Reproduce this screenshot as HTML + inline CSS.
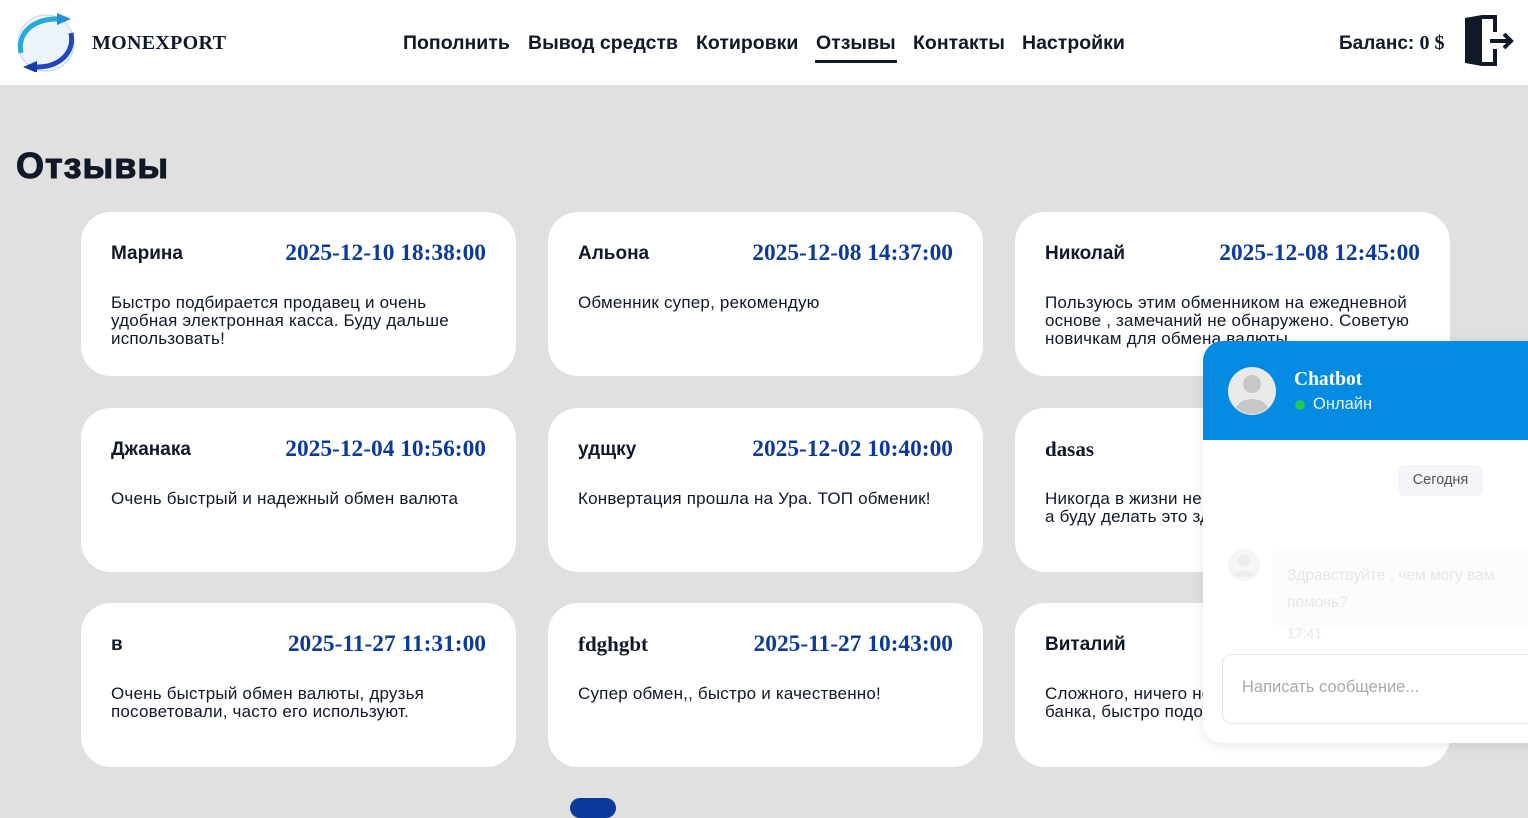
<!DOCTYPE html>
<html><head><meta charset="utf-8"><style>
*{margin:0;padding:0;box-sizing:border-box}
body{width:1528px;height:804px;overflow:hidden;background:#e0e0e0;font-family:"Liberation Sans",sans-serif;color:#111827;position:relative}
.hdr{position:absolute;left:0;top:0;width:1528px;height:85px;background:#fff}
.logo{position:absolute;left:92px;top:32px;font:bold 20px "Liberation Serif",serif;color:#111827;letter-spacing:.3px}
.nav{position:absolute;top:32px;font-weight:bold;font-size:19.5px}
.nav span{position:absolute;white-space:nowrap}
.bal{position:absolute;left:1339px;top:32px;font-weight:bold;font-size:19px}
h1{position:absolute;left:16px;top:145px;font-size:36px;font-weight:bold;letter-spacing:1px;-webkit-text-stroke:1px #111827}
.card{position:absolute;width:435px;height:164px;background:#fff;border-radius:30px}
.nm{position:absolute;left:30px;top:31px;font-weight:bold;font-size:19px}
.dt{position:absolute;right:30px;top:28px;font:bold 23.4px "Liberation Serif",serif;color:#0b3a9a}
.tx{position:absolute;left:30px;top:82px;width:368px;font-size:17px;line-height:18px;letter-spacing:.2px}
.chat{position:absolute;left:1203px;top:341px;width:340px;height:402px;background:#fff;border-radius:20px 0 0 20px;overflow:hidden;box-shadow:0 2px 12px rgba(0,0,0,.1)}
.ch{height:99px;background:#068be3;position:relative}
</style></head><body>
<div class="hdr">
<svg style="position:absolute;left:15px;top:13px" width="63" height="59" viewBox="0 0 63 59"><circle cx="31" cy="30" r="28" fill="#eef4fb" stroke="#bcd3ee"/><path d="M6 40 C2 20 18 6 42 6" stroke="#2aa8d8" stroke-width="5" fill="none"/><polygon points="42,0 56,6 42,12" fill="#1e90d8"/><path d="M56 20 C60 40 44 54 22 54" stroke="#1f47b8" stroke-width="5" fill="none"/><polygon points="22,48 8,54 22,60" fill="#1a3aa8"/></svg>
<div class="logo">MONEXPORT</div>
<div class="nav"><span style="left:403px">Пополнить</span><span style="left:528px">Вывод средств</span><span style="left:696px">Котировки</span><span style="left:816px">Отзывы</span><span style="left:913px">Контакты</span><span style="left:1022px">Настройки</span></div>
<div style="position:absolute;left:815px;top:60px;width:82px;height:3px;background:#111827"></div>
<div class="bal">Баланс: <span style="font-family:'Liberation Serif',serif;font-size:20px">0 $</span></div>
<svg style="position:absolute;left:1464px;top:15px" width="52" height="52" viewBox="0 0 52 52"><path d="M1 3 L18 0 L18 51 L1 48Z" fill="#111827"/><path d="M18 2 H31 V17 M31 34 V49 H18" stroke="#111827" stroke-width="4" fill="none"/><path d="M26 26 H47 M40 19 L47 26 L40 33" stroke="#111827" stroke-width="4" fill="none"/></svg>
</div>
<h1>Отзывы</h1>

<div class="card" style="left:81px;top:212px"><div class="nm">Марина</div><div class="dt">2025-12-10 18:38:00</div><div class="tx">Быстро подбирается продавец и очень удобная электронная касса. Буду дальше использовать!</div></div>
<div class="card" style="left:548px;top:212px"><div class="nm">Альона</div><div class="dt">2025-12-08 14:37:00</div><div class="tx">Обменник супер, рекомендую</div></div>
<div class="card" style="left:1015px;top:212px"><div class="nm">Николай</div><div class="dt">2025-12-08 12:45:00</div><div class="tx">Пользуюсь этим обменником на ежедневной основе , замечаний не обнаружено. Советую новичкам для обмена валюты</div></div>
<div class="card" style="left:81px;top:408px"><div class="nm">Джанака</div><div class="dt">2025-12-04 10:56:00</div><div class="tx">Очень быстрый и надежный обмен валюта</div></div>
<div class="card" style="left:548px;top:408px"><div class="nm">удщку</div><div class="dt">2025-12-02 10:40:00</div><div class="tx">Конвертация прошла на Ура. ТОП обменик!</div></div>
<div class="card" style="left:1015px;top:408px"><div class="nm" style="font-family:'Liberation Serif',serif;font-size:21px;top:29px">dasas</div><div class="tx">Никогда в жизни не менял валюту в банках, а буду делать это здесь. Рекомендую!</div></div>
<div class="card" style="left:81px;top:603px"><div class="nm">в</div><div class="dt">2025-11-27 11:31:00</div><div class="tx">Очень быстрый обмен валюты, друзья посоветовали, часто его используют.</div></div>
<div class="card" style="left:548px;top:603px"><div class="nm" style="font-family:'Liberation Serif',serif;font-size:21px;top:29px">fdghgbt</div><div class="dt">2025-11-27 10:43:00</div><div class="tx">Супер обмен,, быстро и качественно!</div></div>
<div class="card" style="left:1015px;top:603px"><div class="nm">Виталий</div><div class="tx">Сложного, ничего нет. Обменивала с Альфа банка, быстро подобрались</div></div>
<div style="position:absolute;left:570px;top:798px;width:46px;height:20px;border-radius:12px;background:#0b3a9a"></div>

<div class="chat">
<div class="ch">
<svg style="position:absolute;left:25px;top:26px" width="48" height="48" viewBox="0 0 48 48"><circle cx="24" cy="24" r="24" fill="#e9e9e9"/><circle cx="24" cy="17" r="9" fill="#c7c7c7"/><path d="M8 41 C12 29 36 29 40 41 A24 24 0 0 1 8 41Z" fill="#c7c7c7"/></svg>
<div style="position:absolute;left:91px;top:28px;color:#fff;font:bold 19.5px 'Liberation Serif',serif">Chatbot</div>
<div style="position:absolute;left:92px;top:59px;width:10px;height:10px;border-radius:5px;background:#22c55e"></div>
<div style="position:absolute;left:110px;top:54px;color:#e8f3ff;font-size:16.5px">Онлайн</div>
</div>
<div style="position:absolute;left:195px;top:124px;width:85px;height:31px;background:#f3f5f8;border-radius:6px;font-size:14.5px;color:#555;text-align:center;line-height:31px">Сегодня</div>
<svg style="position:absolute;left:25px;top:208px" width="32" height="32" viewBox="0 0 48 48"><circle cx="24" cy="24" r="24" fill="#f6f6f6"/><circle cx="24" cy="17" r="9" fill="#ececec"/><path d="M8 41 C12 29 36 29 40 41Z" fill="#ececec"/></svg>
<div style="position:absolute;left:70px;top:206px;width:280px;height:82px;background:#fcfcfc;border-radius:10px"></div>
<div style="position:absolute;left:84px;top:221px;font-size:15.5px;line-height:27px;color:#e6e6e6;width:240px">Здравствуйте , чем могу вам помочь?</div>
<div style="position:absolute;left:84px;top:284px;font-size:14px;color:#e6e6e6">17:41</div>
<div style="position:absolute;left:19px;top:313px;width:340px;height:70px;border:1px solid #e3e3e3;border-radius:10px"></div>
<div style="position:absolute;left:39px;top:337px;font-size:16.5px;color:#a6a9ae">Написать сообщение...</div>
</div>
</body></html>
